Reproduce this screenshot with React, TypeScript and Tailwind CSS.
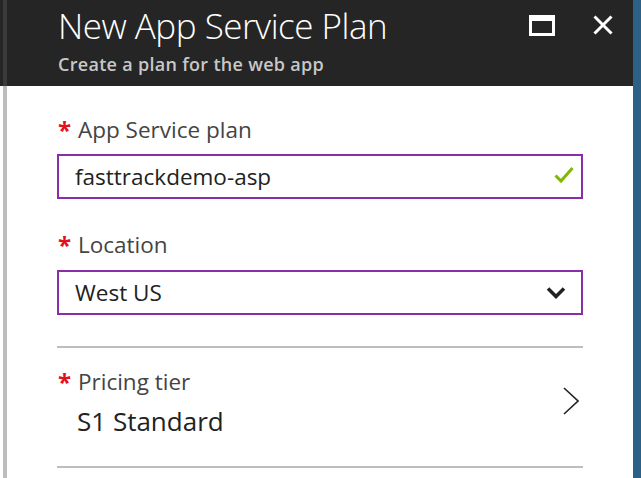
import React from 'react';

const font = { fontFamily: '"Open Sans", "Noto Sans", sans-serif' };

const Required: React.FC<{ label: string }> = ({ label }) => (
    <div className="flex items-start text-[22.5px] leading-[28px]">
        <span className="w-[21px] pl-[1px] text-[24px] font-bold leading-[28px] text-[#e3101e]">*</span>
        <span className="text-[#444444]">{label}</span>
    </div>
);

const App: React.FC = () => {
    return (
        <div className="flex h-[478px] w-[641px] overflow-hidden bg-white" style={font}>
            <div className="flex w-[633px] flex-col">
                {/* blade header */}
                <div className="flex h-[86px] bg-[#252525]">
                    <div className="w-[3px]" />
                    <div className="w-[4px] bg-[#3a3a3a]" />
                    <div className="flex flex-1 items-start pl-[51px] pr-[20px]">
                        <div className="flex-1 pt-[6px]">
                            <div className="text-[35px] font-light leading-[40px] tracking-[-0.5px] text-white">
                                New App Service Plan
                            </div>
                            <div className="mt-[7px] text-[18px] font-semibold leading-[22px] tracking-[0.3px] text-[#c8c8c8]">
                                Create a plan for the web app
                            </div>
                        </div>
                        <div className="mt-[15px] flex items-start gap-[38px]">
                            <div className="h-[21px] w-[26px] border-[3px] border-t-[6px] border-white" />
                            <svg width="20" height="20" viewBox="0 0 20 20">
                                <path d="M1.5 1.5 L18.5 18.5 M18.5 1.5 L1.5 18.5" stroke="white" strokeWidth="3" fill="none" />
                            </svg>
                        </div>
                    </div>
                </div>

                {/* blade body */}
                <div className="flex flex-1">
                    <div className="w-[3px]" />
                    <div className="w-[4px] bg-[#bdbdbd]" />
                    <div className="flex w-[576px] flex-col pl-[50px] pt-[30px]">
                        <Required label="App Service plan" />
                        <div className="mt-[10px] flex h-[45px] items-center border-2 border-[#8a2ea8] pl-[16px] pr-[7px]">
                            <span className="flex-1 text-[22.5px] leading-[28px] text-[#222222]">fasttrackdemo-asp</span>
                            <svg width="20" height="18" viewBox="0 0 20 18" className="mt-[-3px]">
                                <path d="M1.5 9.5 L7 15 L18.5 2" stroke="#7fba00" strokeWidth="3" fill="none" />
                            </svg>
                        </div>

                        <div className="mt-[32px]">
                            <Required label="Location" />
                        </div>
                        <div className="mt-[11px] flex h-[45px] items-center border-2 border-[#8a2ea8] pl-[16px] pr-[15px]">
                            <span className="flex-1 text-[22.5px] leading-[28px] text-[#222222]">West US</span>
                            <svg width="20" height="14" viewBox="0 0 20 14">
                                <path d="M2 2.5 L10 10.5 L18 2.5" stroke="#222222" strokeWidth="3.5" fill="none" />
                            </svg>
                        </div>

                        <div className="mt-[31px] h-[2px] bg-[#bdbdbd]" />

                        <div className="mt-[20px] flex items-center pr-[4px]">
                            <div className="flex-1">
                                <Required label="Pricing tier" />
                                <div className="mt-[9px] pl-[20px] text-[26px] leading-[32px] text-[#222222]">
                                    S1 Standard
                                </div>
                            </div>
                            <svg width="16" height="28" viewBox="0 0 16 28" className="mt-[-4px]">
                                <path d="M1 1 L15 14 L1 27" stroke="#222222" strokeWidth="1.6" fill="none" />
                            </svg>
                        </div>

                        <div className="mt-[29px] h-[2px] bg-[#bdbdbd]" />
                    </div>
                </div>
            </div>
            <div className="w-[8px] bg-[#2a6184]" />
        </div>
    );
};

export default App;
